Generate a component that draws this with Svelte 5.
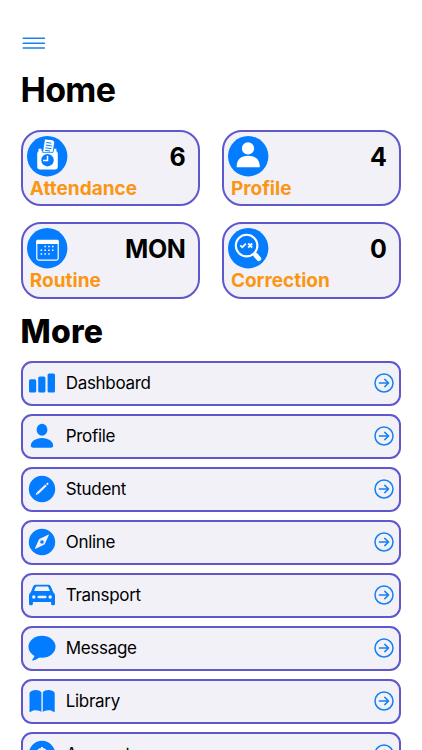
<script>
  const stats = [
    { icon: 'attendance', title: 'Attendance', value: '6' },
    { icon: 'profile', title: 'Profile', value: '4' },
    { icon: 'routine', title: 'Routine', value: 'MON' },
    { icon: 'correction', title: 'Correction', value: '0' }
  ];

  const items = [
    'Dashboard',
    'Profile',
    'Student',
    'Online',
    'Transport',
    'Message',
    'Library',
    'Account'
  ];
</script>

<main class="screen">
  <button class="menu" aria-label="Menu">
    <svg width="24" height="14" viewBox="0 0 24 14">
      <path d="M1.2 2.3h21.2M1.2 7.2h21.2M1.2 12.1h21.2" />
    </svg>
  </button>

  <h1 class="title">Home</h1>

  <section class="stats">
    {#each stats as stat}
      <div class="stat">
        <div class="stat__top">
          <svg class="stat__icon" width="41" height="41" viewBox="0 0 41 41">
            <circle class="blue" cx="20.2" cy="20.2" r="20.2" />
            {#if stat.icon === 'attendance'}
              <rect class="white" x="10.2" y="15" width="20.6" height="18.6" rx="3" />
              <path class="white" d="M11.5 16v-3.2h3V16zM26.4 16v-3.2h3V16z" />
              <path class="paper" d="M15.6 16.4 17.6 2.9l8.3 1 1.8 2-1.6 10.5z" />
              <path class="ink" d="m19.3 6.4 5 .8M18.9 9.1l6 .9M18.5 11.8l6 .9M18.1 14.3l5 .7" />
              <circle class="blue" cx="20.5" cy="24.2" r="6.2" />
              <path class="line" d="M20.5 19.8v4.8h-4.5" />
            {:else if stat.icon === 'profile'}
              <circle class="white" cx="20" cy="12.4" r="6.1" />
              <path class="white" d="M8.6 31.3c0-8 4.4-11.5 11.5-11.5s11.7 3.5 11.7 11.5z" />
            {:else if stat.icon === 'routine'}
              <rect class="thin" x="9.8" y="12.7" width="21.4" height="19.4" rx="1.8" />
              <path class="white" d="M9.2 16v-2.6c0-1 .7-1.6 1.6-1.6h19.4c.9 0 1.6.6 1.6 1.6V16z" />
              <path class="dots" d="M17.4 18.6h11M13.6 22.3h15M13.6 26h11" />
            {:else}
              <circle class="lens" cx="18.6" cy="17.6" r="10.8" />
              <path class="line" d="m26.3 25.6 2 2" />
              <path class="handle" d="m27.6 27.1 3.2 3.7" />
              <path class="mark" d="m12.3 17.3 2 2 3.6-3.7M20.2 15.5l4 4M24.2 15.5l-4 4" />
            {/if}
          </svg>
          <span class="stat__value">{stat.value}</span>
        </div>
        <span class="stat__title">{stat.title}</span>
      </div>
    {/each}
  </section>

  <h2 class="more">More</h2>

  <nav class="list">
    {#each items as item}
      <a class="row" href="#{item}">
        <svg class="row__icon" width="28" height="28" viewBox="0 0 28 28">
          {#if item === 'Dashboard'}
            <rect x="1" y="10.3" width="7.2" height="13.2" rx="1.6" />
            <rect x="10.2" y="7.5" width="7.2" height="16" rx="1.6" />
            <rect x="19.6" y="4.4" width="7.4" height="19.1" rx="1.6" />
          {:else if item === 'Profile'}
            <ellipse cx="14" cy="7.7" rx="5.4" ry="6" />
            <path d="M2.8 23.6c0-4 4.6-7.7 11.2-7.7s11.2 3.7 11.2 7.7c0 1.5-.8 2.1-2.4 2.1H5.2c-1.6 0-2.4-.6-2.4-2.1z" />
          {:else if item === 'Student'}
            <circle cx="14" cy="14" r="13.2" />
            <path class="pencil" d="m9.4 18.4 8.6-8.2" />
            <path class="white" d="m7.6 20 .9-2.5 1.6 1.7zM18 8.9l1.2-1.1c.8-.4 1.8.6 1.2 1.4l-1 1.1z" />
          {:else if item === 'Online'}
            <circle cx="14" cy="14" r="13.2" />
            <path class="white" d="M20.8 7.2c.3-.6-.1-.7-.6-.5l-8.4 4c-.5.3-.8.6-1 1.1l-3.7 8.3c-.2.6.1.8.7.6l8.2-4c.5-.3.8-.6 1-1.1z" />
            <circle cx="14" cy="14" r="1.8" />
          {:else if item === 'Transport'}
            <path fill-rule="evenodd" d="M8.2 3.8h11.6c1.6 0 2.7.6 3.3 2.1l2.1 5.3c1.3 1 1.8 2 1.8 3.9v8c0 .7-.5 1.2-1.2 1.2h-1.5c-.7 0-1.2-.5-1.2-1.2v-2.2H4.9v2.2c0 .7-.5 1.2-1.2 1.2H2.2c-.7 0-1.2-.5-1.2-1.2v-8c0-1.9.5-2.9 1.8-3.9l2.1-5.3c.6-1.5 1.7-2.1 3.3-2.1zM6.1 9.9h15.8l-1.4-3.3c-.3-.7-.7-1-1.5-1H9c-.8 0-1.2.3-1.5 1z" />
            <circle class="white" cx="5.8" cy="16" r="1.7" />
            <circle class="white" cx="22.2" cy="16" r="1.7" />
            <rect class="white" x="9.5" y="14.8" width="9" height="2.5" rx="1.25" />
          {:else if item === 'Message'}
            <ellipse cx="14" cy="12.8" rx="13.5" ry="11" />
            <path d="M6.8 20.5c-.2 2-1.1 3.3-2.3 4.7-.7.9-.1 1.5 1 1.2 2.8-.7 4.7-2 6.4-3.5z" />
          {:else if item === 'Library'}
            <path d="M1.5 5.8C3 3.9 5 3.1 7.5 3.1s4.7.7 5.9 2.5V25c-1.2-1-3.1-1.7-5.7-1.7-2.4 0-4 .6-4.9 1.5-.7.6-1.3.2-1.3-.6zM26.7 5.8c-1.5-1.9-3.5-2.7-6-2.7s-4.7.7-5.9 2.5V25c1.2-1 3.1-1.7 5.7-1.7 2.4 0 4 .6 4.9 1.5.7.6 1.3.2 1.3-.6z" />
          {:else}
            <circle cx="14" cy="14" r="13.2" />
            <path class="dollar" d="M14 7v14M18 11.3c-.4-1.7-2-2.3-4-2.3-2.2 0-3.9.9-3.9 2.5 0 3.7 8 1.4 8 5.1 0 1.6-1.8 2.5-4.1 2.5s-3.9-.9-4.2-2.5" />
          {/if}
        </svg>
        <span class="row__label">{item}</span>
        <svg class="row__arrow" width="20" height="20" viewBox="0 0 20 20">
          <circle cx="10" cy="10" r="9" />
          <path d="M5.4 10h9M10.8 6.4l3.8 3.6-3.8 3.6" />
        </svg>
      </a>
    {/each}
  </nav>
</main>

<style>
  :global(body) {
    background: #fff;
  }

  .screen {
    box-sizing: border-box;
    color: #000;
    font-family: Inter, "Liberation Sans", sans-serif;
    height: 750px;
    overflow: hidden;
    padding: 36px 20.7px 0 20.5px;
  }

  .menu {
    background: none;
    border: 0;
    display: block;
    height: 14px;
    margin-left: 1.2px;
    padding: 0;
  }

  .menu svg {
    display: block;
    fill: none;
    stroke: #1680ef;
    stroke-linecap: round;
    stroke-width: 1.5;
  }

  .title {
    font-size: 34px;
    font-weight: 650;
    letter-spacing: -0.7px;
    line-height: 40px;
    margin: 20px 0 19.5px;
  }

  .stats {
    display: grid;
    gap: 16.1px 21.4px;
    grid-template-columns: 1fr 1fr;
  }

  .stat {
    background: #f2f1f8;
    border: 2px solid #5f57cc;
    border-radius: 20px;
    box-sizing: border-box;
    height: 76.5px;
    padding: 4.3px 13px 0 4.3px;
  }

  .stat__top {
    display: flex;
    justify-content: space-between;
  }

  .stat__icon {
    display: block;
  }

  .stat__value {
    font-size: 25px;
    font-weight: 700;
    height: 41px;
    letter-spacing: -0.5px;
    line-height: 43px;
  }

  .stat__title {
    color: #fb9614;
    display: block;
    font-size: 19px;
    font-weight: 650;
    line-height: 23px;
    padding-left: 3px;
  }

  .blue {
    fill: #047cff;
  }

  .white {
    fill: #fff;
  }

  .paper {
    fill: #fff;
    stroke: #047cff;
    stroke-width: 0.8;
  }

  .ink {
    stroke: #047cff;
    stroke-width: 1;
  }

  .line,
  .thin,
  .lens,
  .handle,
  .mark,
  .dots {
    fill: none;
    stroke: #fff;
  }

  .line {
    stroke-width: 1.5;
  }

  .thin {
    stroke-width: 1.2;
  }

  .dots {
    stroke-dasharray: 1.5 2.3;
    stroke-width: 1.5;
  }

  .lens {
    stroke-width: 2.1;
  }

  .handle {
    stroke-linecap: round;
    stroke-width: 4.8;
  }

  .mark {
    stroke-width: 1.8;
  }

  .more {
    font-size: 32px;
    font-weight: 800;
    letter-spacing: 0.2px;
    line-height: 40px;
    margin: 13px 0 9.4px;
  }

  .list {
    display: flex;
    flex-direction: column;
    gap: 8px;
  }

  .row {
    align-items: center;
    background: #f2f1f8;
    border: 2px solid #5f57cc;
    border-radius: 11px;
    box-sizing: border-box;
    color: #000;
    display: flex;
    flex: none;
    height: 45px;
    padding: 0 5.3px 0 5.5px;
    text-decoration: none;
  }

  .row__icon {
    fill: #047cff;
    flex: none;
  }

  .row__icon .white {
    fill: #f2f1f8;
  }

  .pencil {
    stroke: #f2f1f8;
    stroke-width: 2.2;
  }

  .dollar {
    fill: none;
    stroke: #f2f1f8;
    stroke-width: 2;
  }

  .row__label {
    flex: 1;
    font-size: 17px;
    letter-spacing: -0.3px;
    line-height: 22px;
    padding-left: 9.7px;
  }

  .row__arrow {
    fill: none;
    stroke: #1680ef;
    stroke-linecap: round;
    stroke-linejoin: round;
    stroke-width: 1.5;
  }
</style>
